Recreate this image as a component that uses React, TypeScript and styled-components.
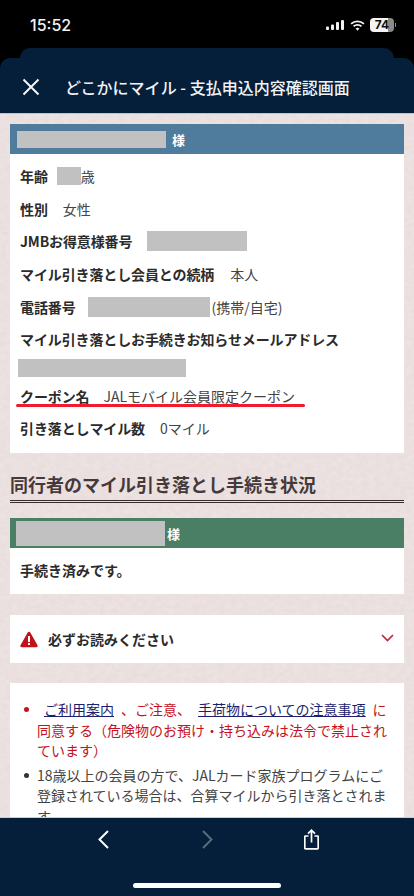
import React from "react";
import styled, { createGlobalStyle } from "styled-components";

const noise = `url("data:image/svg+xml,%3Csvg xmlns='http://www.w3.org/2000/svg' width='300' height='300'%3E%3Cfilter id='n'%3E%3CfeTurbulence type='fractalNoise' baseFrequency='0.16 0.22' numOctaves='3' seed='4'/%3E%3CfeColorMatrix values='0 0 0 0 0.66 0 0 0 0 0.55 0 0 0 0 0.55 0 0 0 0.34 -0.08'/%3E%3C/filter%3E%3Crect width='300' height='300' filter='url(%23n)'/%3E%3C/svg%3E")`;

const Global = createGlobalStyle`
  html, body { margin: 0; padding: 0; background: #000; }
  body { font-family: "Noto Sans CJK JP", "Liberation Sans", sans-serif; }
  * { box-sizing: border-box; }
`;

const Screen = styled.div`
  width: 414px;
  height: 896px;
  display: flex;
  flex-direction: column;
  overflow: hidden;
  background: #000;
`;

const StatusBar = styled.div`
  height: 48px;
  flex: none;
  display: flex;
  align-items: flex-start;
  justify-content: space-between;
  padding: 15px 20px 0 30px;
  color: #f2f2f2;
`;

const Time = styled.span`
  font-family: "Inter", "Liberation Sans", sans-serif;
  font-size: 16px;
  font-weight: 500;
  line-height: 20px;
`;

const StatusIcons = styled.div`
  display: flex;
  align-items: center;
  gap: 5px;
  height: 20px;
`;

const Battery = styled.div`
  position: relative;
  width: 24px;
  height: 14px;
  border-radius: 4px;
  background: linear-gradient(90deg, #f4f4f4 0 76%, #8a8a8a 76% 100%);
  color: #111;
  font-family: "Inter", "Liberation Sans", sans-serif;
  font-size: 12px;
  font-weight: 700;
  line-height: 14px;
  text-align: center;
  &::after {
    content: "";
    position: absolute;
    right: -2px;
    top: 5px;
    width: 1px;
    height: 4px;
    background: #8a8a8a;
  }
`;

const BackSheet = styled.div`
  height: 10px;
  flex: none;
  margin: 0 20px;
  background: #051e39;
  border-radius: 10px 10px 0 0;
`;

const Header = styled.header`
  height: 56px;
  flex: none;
  background: #051e39;
  border-radius: 10px 10px 0 0;
  border-bottom: 1px solid #c9c0c0;
  display: flex;
  align-items: center;
  gap: 25px;
  padding: 3px 0 0 22px;
  color: #f1f3f5;
`;

const Title = styled.h1`
  margin: 0;
  font-size: 16px;
  font-weight: 500;
  line-height: 24px;
  letter-spacing: 0.02px;
`;

const Main = styled.main`
  flex: 1;
  min-height: 0;
  overflow: hidden;
  background-color: #ede3e3;
  background-image: ${noise};
  padding: 10px 10px 0;
  display: flex;
  flex-direction: column;
`;

const Card = styled.section`
  background: #fff;
  flex: none;
`;

const CardHead = styled.div<{ $color: string; $h: number; $px: number; $gap: number }>`
  height: ${(p) => p.$h}px;
  background: ${(p) => p.$color};
  display: flex;
  align-items: center;
  gap: ${(p) => p.$gap}px;
  padding-left: ${(p) => p.$px}px;
  color: #fff;
  font-size: 13px;
  font-weight: 700;
`;

const Redact = styled.span<{ $w: number; $h: number }>`
  display: inline-block;
  flex: none;
  width: ${(p) => p.$w}px;
  height: ${(p) => p.$h}px;
  background: #c1c1c1;
  vertical-align: middle;
`;

const Fields = styled.dl`
  margin: 0;
  padding: 6px 10px 8px;
  height: 299px;
  display: flex;
  flex-direction: column;
`;

const Row = styled.div`
  position: relative;
  height: 32.6px;
  flex: none;
  display: flex;
  align-items: center;
  font-size: 14px;
  line-height: 20px;
  color: #333;
`;

const MailRow = styled(Row)`
  height: 24px;
  margin-left: -2px;
`;

const Label = styled.dt`
  font-weight: 700;
  color: #2b2b2b;
  white-space: nowrap;
  letter-spacing: -0.12px;
`;

const Value = styled.dd<{ $ml?: number }>`
  margin: 0 0 0 ${(p) => p.$ml ?? 15}px;
  display: flex;
  align-items: center;
  color: #444;
  white-space: nowrap;
`;

const PhoneNote = styled.span`
  margin-left: 2px;
`;

const Annotation = styled.span`
  position: absolute;
  left: -4px;
  top: 24px;
  width: 289px;
  height: 3px;
  border-radius: 2px;
  background: #ee1c2e;
`;

const SectionTitle = styled.h2`
  margin: 19px 0 15px;
  height: 31px;
  flex: none;
  border-bottom: 3px double #3a2a2a;
  font-size: 18px;
  font-weight: 700;
  line-height: 25px;
  color: #46393a;
  white-space: nowrap;
`;

const Done = styled.p`
  margin: 0;
  height: 46px;
  padding: 12px 10px 0;
  font-size: 14px;
  font-weight: 700;
  line-height: 20px;
  color: #2b2b2b;
`;

const Accordion = styled.div`
  margin-top: 21px;
  height: 48px;
  flex: none;
  background: #fff;
  display: flex;
  align-items: center;
  padding: 0 10px;
  gap: 10px;
`;

const AccordionTitle = styled.span`
  flex: 1;
  font-size: 14px;
  font-weight: 700;
  color: #2b2b2b;
`;

const Chevron = styled.svg`
  margin-top: -3px;
`;

const Notice = styled.ul`
  margin: 20px 0 0;
  padding: 16px 15px 0 27px;
  flex: none;
  background: #fff;
  list-style: none;
  font-size: 14px;
  line-height: 20.5px;
`;

const Item = styled.li<{ $red?: boolean }>`
  position: relative;
  color: ${(p) => (p.$red ? "#c5121c" : "#444")};
  margin-bottom: 4px;
  &::before {
    content: "";
    position: absolute;
    left: -13px;
    top: 8px;
    width: 5px;
    height: 5px;
    border-radius: 50%;
    background: ${(p) => (p.$red ? "#c5121c" : "#333")};
  }
`;

const DocLink = styled.a`
  color: #1c1f6e;
  text-decoration: underline;
  margin: 0 7px;
`;

const BottomBar = styled.nav`
  height: 79px;
  flex: none;
  background: #051e39;
  border-top: 1px solid #d0cccc;
  display: flex;
  flex-direction: column;
  align-items: center;
`;

const NavIcons = styled.div`
  height: 43px;
  width: 100%;
  display: grid;
  grid-template-columns: repeat(3, 28px);
  justify-content: center;
  column-gap: 76px;
  align-items: center;
`;

const NavIcon = styled.div`
  display: flex;
  justify-content: center;
`;

const HomeIndicator = styled.div`
  margin-top: 22px;
  width: 148px;
  height: 5px;
  border-radius: 3px;
  background: #fff;
`;

export default function App() {
  return (
    <Screen>
      <Global />
      <StatusBar>
        <Time>15:52</Time>
        <StatusIcons>
          <svg width="19" height="10" viewBox="0 0 19 10" fill="#f2f2f2">
            <rect x="0" y="6.500" width="3" height="3.500" rx="1" />
            <rect x="5" y="4.500" width="3" height="5.500" rx="1" />
            <rect x="10" y="2" width="3" height="8" rx="1" />
            <rect x="15" y="0" width="3" height="10" rx="1" />
          </svg>
          <svg width="15" height="11" viewBox="0 0 16 12" fill="none" stroke="#f2f2f2" strokeWidth="2">
            <path d="M1 4.300a10 10 0 0 1 14 0" />
            <path d="M3.700 7a6.200 6.200 0 0 1 8.600 0" />
            <path d="M8 11.600 5.900 9.400a3 3 0 0 1 4.200 0Z" fill="#f2f2f2" stroke="none" />
          </svg>
          <Battery>74</Battery>
        </StatusIcons>
      </StatusBar>
      <BackSheet />
      <Header>
        <svg width="18" height="18" viewBox="0 0 18 18" stroke="#f4f6f8" strokeWidth="2" fill="none">
          <path d="M1.500 1.500 16.500 16.500M16.500 1.500 1.500 16.500" />
        </svg>
        <Title>どこかにマイル - 支払申込内容確認画面</Title>
      </Header>
      <Main>
        <Card>
          <CardHead $color="#4f7b9c" $h={30} $px={7} $gap={6}>
            <Redact $w={149} $h={17} />
            様
          </CardHead>
          <Fields>
            <Row>
              <Label>年齢</Label>
              <Value $ml={9}>
                <Redact $w={24} $h={18} />
                歳
              </Value>
            </Row>
            <Row>
              <Label>性別</Label>
              <Value>女性</Value>
            </Row>
            <Row>
              <Label>JMBお得意様番号</Label>
              <Value><Redact $w={100} $h={20} /></Value>
            </Row>
            <Row>
              <Label>マイル引き落とし会員との続柄</Label>
              <Value $ml={16}>本人</Value>
            </Row>
            <Row>
              <Label>電話番号</Label>
              <Value $ml={12}>
                <Redact $w={122} $h={20} />
                <PhoneNote>(携帯/自宅)</PhoneNote>
              </Value>
            </Row>
            <Row>
              <Label>マイル引き落としお手続きお知らせメールアドレス</Label>
            </Row>
            <MailRow>
              <Redact $w={168} $h={18} />
            </MailRow>
            <Row>
              <Label>クーポン名</Label>
              <Value $ml={14}>JALモバイル会員限定クーポン</Value>
              <Annotation />
            </Row>
            <Row>
              <Label>引き落としマイル数</Label>
              <Value>0マイル</Value>
            </Row>
          </Fields>
        </Card>
        <SectionTitle>同行者のマイル引き落とし手続き状況</SectionTitle>
        <Card>
          <CardHead $color="#4a7f66" $h={30} $px={6} $gap={2}>
            <Redact $w={149} $h={25} />
            様
          </CardHead>
          <Done>手続き済みです。</Done>
        </Card>
        <Accordion>
          <svg width="18" height="17" viewBox="0 0 18 17">
            <path d="M9 .8c.6 0 1 .3 1.300.8l7.200 12.600c.6 1 0 2-1.200 2H1.700c-1.200 0-1.800-1-1.200-2L7.700 1.600C8 1.100 8.400.8 9 .8Z" fill="#c1121c" />
            <rect x="8" y="5" width="2" height="6" fill="#fff" />
            <rect x="8" y="12" width="2" height="2" fill="#fff" />
          </svg>
          <AccordionTitle>必ずお読みください</AccordionTitle>
          <Chevron width="13" height="8" viewBox="0 0 13 8" fill="none" stroke="#c1273a" strokeWidth="1.700">
            <path d="M1 1l5.500 5.500L12 1" />
          </Chevron>
        </Accordion>
        <Notice>
          <Item $red>
            <DocLink>ご利用案内</DocLink>、ご注意、<DocLink>手荷物についての注意事項</DocLink>に<br />
            同意する（危険物のお預け・持ち込みは法令で禁止されています）
          </Item>
          <Item>18歳以上の会員の方で、JALカード家族プログラムにご登録されている場合は、合算マイルから引き落とされます。</Item>
        </Notice>
      </Main>
      <BottomBar>
        <NavIcons>
          <NavIcon>
            <svg width="11" height="19" viewBox="0 0 11 19" fill="none" stroke="#fff" strokeWidth="2">
              <path d="M10 1 1.500 9.500 10 18" />
            </svg>
          </NavIcon>
          <NavIcon>
            <svg width="11" height="19" viewBox="0 0 11 19" fill="none" stroke="#5b6b7d" strokeWidth="2">
              <path d="M1 1l8.500 8.500L1 18" />
            </svg>
          </NavIcon>
          <NavIcon>
            <svg width="15" height="21" viewBox="0 0 15 21" fill="none" stroke="#fff" strokeWidth="1.700">
              <path d="M4.500 7H1.500a.7.7 0 0 0-.7.700v11.500a.7.7 0 0 0 .7.700h12a.7.7 0 0 0 .7-.7V7.700a.7.7 0 0 0-.7-.7h-3" />
              <path d="M7.500 13.500V1.200M4 4.700 7.500 1.200 11 4.700" />
            </svg>
          </NavIcon>
        </NavIcons>
        <HomeIndicator />
      </BottomBar>
    </Screen>
  );
}
